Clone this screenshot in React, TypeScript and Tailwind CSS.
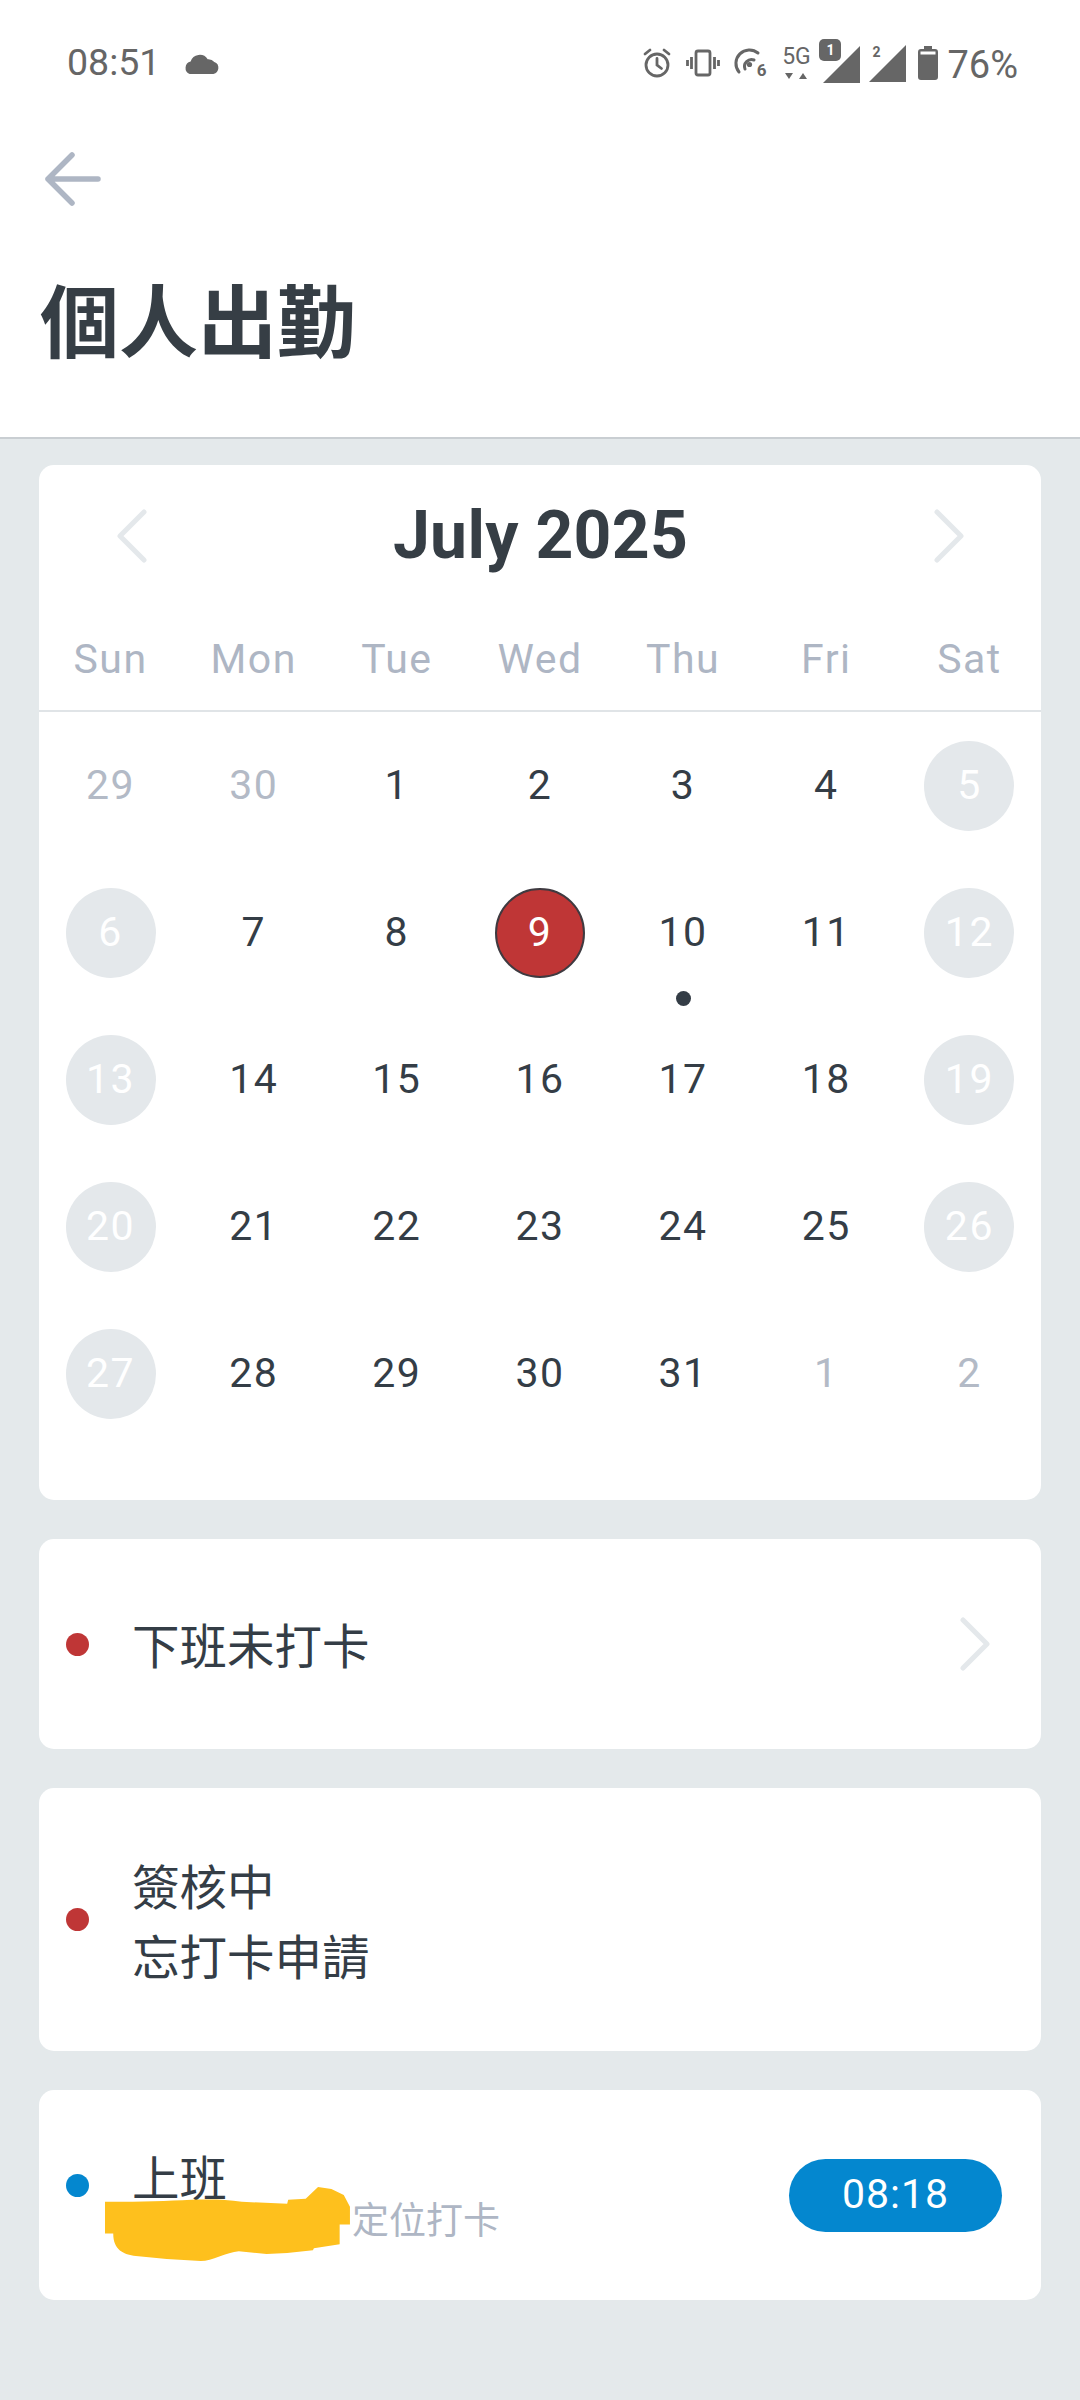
const weekdays = ['Sun', 'Mon', 'Tue', 'Wed', 'Thu', 'Fri', 'Sat'];

type Day = { label: number; kind?: 'muted' | 'off' | 'today'; dot?: boolean };

const rows: Day[][] = [
  [{ label: 29, kind: 'muted' }, { label: 30, kind: 'muted' }, { label: 1 }, { label: 2 }, { label: 3 }, { label: 4 }, { label: 5, kind: 'off' }],
  [{ label: 6, kind: 'off' }, { label: 7 }, { label: 8 }, { label: 9, kind: 'today' }, { label: 10, dot: true }, { label: 11 }, { label: 12, kind: 'off' }],
  [{ label: 13, kind: 'off' }, { label: 14 }, { label: 15 }, { label: 16 }, { label: 17 }, { label: 18 }, { label: 19, kind: 'off' }],
  [{ label: 20, kind: 'off' }, { label: 21 }, { label: 22 }, { label: 23 }, { label: 24 }, { label: 25 }, { label: 26, kind: 'off' }],
  [{ label: 27, kind: 'off' }, { label: 28 }, { label: 29 }, { label: 30 }, { label: 31 }, { label: 1, kind: 'muted' }, { label: 2, kind: 'muted' }],
];

const Chevron = ({ left = false, className = '' }: { left?: boolean; className?: string }) => (
  <svg width="32" height="54" viewBox="0 0 32 54" fill="none" className={className}>
    <path
      d={left ? 'M28 3 L4 27 L28 51' : 'M4 3 L28 27 L4 51'}
      stroke="#e4e8eb"
      strokeWidth="5"
      strokeLinecap="round"
      strokeLinejoin="round"
    />
  </svg>
);

const StatusIcons = () => (
  <div className="flex items-center text-[#666666]">
    {/* alarm */}
    <svg width="28" height="30" viewBox="0 0 28 30" fill="none" stroke="#666666" strokeWidth="2.8" strokeLinecap="round">
      <circle cx="14" cy="17" r="11" />
      <path d="M14 10.5 V17 L18.5 20.5" />
      <path d="M2 6 L7 2 M26 6 L21 2" />
    </svg>
    {/* vibrate */}
    <svg width="34" height="28" viewBox="0 0 34 28" fill="none" stroke="#666666" strokeWidth="2.8" className="ml-[15px]">
      <rect x="10" y="2" width="14" height="24" rx="2" />
      <path d="M5.5 8 V20 M1.5 11 V17 M28.5 8 V20 M32.5 11 V17" />
    </svg>
    {/* wifi call */}
    <div className="relative ml-[14px] h-[32px] w-[32px]">
      <svg width="32" height="32" viewBox="0 0 32 32" fill="none" stroke="#666666" strokeWidth="3" strokeLinecap="round">
        <path d="M5 25 A13.5 13.5 0 0 1 24 6" />
        <path d="M11 22 A7 7 0 0 1 20 13" />
        <circle cx="15.5" cy="17.5" r="2.6" fill="#666666" stroke="none" />
      </svg>
      <span className="absolute bottom-0 right-0 font-['Roboto',sans-serif] text-[17px] font-bold leading-[17px]">6</span>
    </div>
    {/* 5G */}
    <div className="ml-[15px] flex h-[36px] w-[30px] flex-col items-center">
      <span className="font-['Roboto',sans-serif] text-[23px] leading-[24px]">5G</span>
      <div className="mt-[4px] flex gap-[6px]">
        <div className="h-0 w-0 border-x-[4px] border-t-[6px] border-x-transparent border-t-[#666666]" />
        <div className="h-0 w-0 border-x-[4px] border-b-[6px] border-x-transparent border-b-[#666666]" />
      </div>
    </div>
    {/* sim 1 */}
    <div className="relative ml-[8px] mt-[-4px] h-[44px] w-[42px]">
      <svg width="38" height="38" viewBox="0 0 38 38" className="absolute bottom-0 right-0">
        <path d="M0 38 L37 1 V38 Z" fill="#666666" />
      </svg>
      <div className="absolute left-0 top-0 flex h-[22px] w-[22px] items-center justify-center rounded-[5px] bg-[#666666] font-['Roboto',sans-serif] text-[14px] font-bold text-white">
        1
      </div>
    </div>
    {/* sim 2 */}
    <div className="relative ml-[8px] h-[38px] w-[38px]">
      <svg width="38" height="38" viewBox="0 0 38 38" className="absolute bottom-0 left-0">
        <path d="M0 38 L37 1 V38 Z" fill="#666666" />
      </svg>
      <span className="absolute left-[3px] top-0 font-['Roboto',sans-serif] text-[14px] font-bold leading-[16px]">2</span>
    </div>
    {/* battery */}
    <svg width="20" height="34" viewBox="0 0 20 34" className="ml-[11px]">
      <path d="M6 0 H14 V3 H17 Q20 3 20 6 V31 Q20 34 17 34 H3 Q0 34 0 31 V6 Q0 3 3 3 H6 Z" fill="#666666" />
      <rect x="2.5" y="5.5" width="15" height="3" fill="#ffffff" />
    </svg>
    <span className="ml-[9px] mt-[3px] font-['Roboto',sans-serif] text-[38px] leading-none">76%</span>
  </div>
);

const DayCell = ({ day }: { day: Day }) => {
  let circle = 'text-[#343d46]';
  if (day.kind === 'muted') circle = 'text-[#b3bac6]';
  if (day.kind === 'off') circle = 'bg-[#e4e8eb] text-white';
  if (day.kind === 'today') circle = 'border-[2px] border-[#3f3a40] bg-[#bf3636] text-white';

  return (
    <div className="relative flex h-[147px] items-center justify-center">
      <div className={`flex h-[90px] w-[90px] items-center justify-center rounded-full text-[41px] tracking-[1.5px] ${circle}`}>
        {day.label}
      </div>
      {day.dot && <div className="absolute bottom-0 h-[15px] w-[15px] rounded-full bg-[#343d46]" />}
    </div>
  );
};

const Dot = ({ color, className = '' }: { color: string; className?: string }) => (
  <div className={`h-[23px] w-[23px] shrink-0 rounded-full ${color} ${className}`} />
);

export default function App() {
  return (
    <div className="h-[2400px] w-[1080px] overflow-hidden bg-[#e4e9eb] font-['Roboto','Noto_Sans_CJK_TC',sans-serif] text-[#343d46]">
      <header className="h-[439px] border-b-[2px] border-[#c9ced2] bg-white">
        <div className="flex h-[126px] items-center justify-between pl-[67px] pr-[62px]">
          <div className="flex items-center">
            <span className="text-[37.5px] leading-none text-[#666666]">08:51</span>
            <svg width="36" height="21" viewBox="0 0 38 22" className="ml-[24px]">
              <path
                d="M8 22 H31 A6.5 6.5 0 0 0 32 9.5 A8 8 0 0 0 25 6.5 A10 10 0 0 0 7 9 A6.8 6.8 0 0 0 6 22 Z"
                fill="#666666"
              />
            </svg>
          </div>
          <StatusIcons />
        </div>
        <div className="pl-[45px] pt-[26px]">
          <svg width="56" height="56" viewBox="0 0 56 56" fill="none" stroke="#aeb6c4" strokeWidth="5.5" strokeLinecap="round" strokeLinejoin="round" className="block">
            <path d="M27 3 L3 27 L27 51 M3 27 H53" />
          </svg>
        </div>
        <h1 className="pl-[40px] pt-[60px] font-['Noto_Sans_CJK_TC',sans-serif] text-[79px] font-bold leading-[100px] text-[#363e45]">
          個人出勤
        </h1>
      </header>

      <main className="flex flex-col gap-[39px] px-[39px] pt-[26px]">
        <section className="h-[1035px] rounded-[15px] bg-white">
          <div className="flex h-[137px] items-center justify-between pl-[77px] pr-[76px] pt-[4px]">
            <Chevron left />
            <span className="text-[66px] font-bold leading-none tracking-[0.3px] text-[#363e45]">July 2025</span>
            <Chevron />
          </div>
          <div className="grid h-[110px] grid-cols-7 items-center border-b-[2px] border-[#e0e4e7] pt-[8px]">
            {weekdays.map((w) => (
              <div key={w} className="text-center text-[41px] tracking-[1.5px] text-[#aeb6c4]">
                {w}
              </div>
            ))}
          </div>
          <div className="grid grid-cols-7">
            {rows.flat().map((day, i) => (
              <DayCell key={i} day={day} />
            ))}
          </div>
        </section>

        <section className="flex h-[210px] items-center rounded-[15px] bg-white pl-[27px] pr-[50px]">
          <Dot color="bg-[#bf3636]" />
          <span className="ml-[43px] mt-[8px] flex-1 text-[47.5px] leading-[70px]">下班未打卡</span>
          <Chevron />
        </section>

        <section className="flex h-[263px] items-center rounded-[15px] bg-white pl-[27px] pr-[50px]">
          <Dot color="bg-[#bf3636]" />
          <div className="ml-[43px] mt-[8px] text-[47.5px] leading-[70px]">
            <div>簽核中</div>
            <div>忘打卡申請</div>
          </div>
        </section>

        <section className="relative flex h-[210px] items-center rounded-[15px] bg-white pl-[27px] pr-[39px]">
          <Dot color="bg-[#0487cf]" className="mb-[20px]" />
          <div className="ml-[43px] mt-[7px] flex-1">
            <div className="text-[47.5px] leading-[56px]">上班</div>
            <div className="mt-[-9px] text-[37px] leading-[46px] text-[#aeb6c4]">
              <span className="inline-block w-[220px]" />定位打卡
            </div>
          </div>
          <div className="flex h-[73px] w-[213px] items-center justify-center rounded-full bg-[#0487cf] text-[41px] tracking-[1px] text-white">
            08:18
          </div>
          {/* yellow scribble covering a redacted address */}
          <svg width="247" height="75" viewBox="0 0 240 76" preserveAspectRatio="none" className="absolute left-[66px] top-[97px]">
            <path
              d="M0 15 L27 15 C70 15 100 10 133 15 L177 17 L178 13 L195 12 L207 0 L220 2 L232 8 L238 20 L238 38 L228 38 L228 58 L203 62 L202 64 L177 67 L157 68 L130 65 C118 66 104 75 93 75 L60 73 L30 70 C18 68 8 64 8 47 L0 47 Z"
              fill="#fec01d"
            />
          </svg>
        </section>
      </main>
    </div>
  );
}
